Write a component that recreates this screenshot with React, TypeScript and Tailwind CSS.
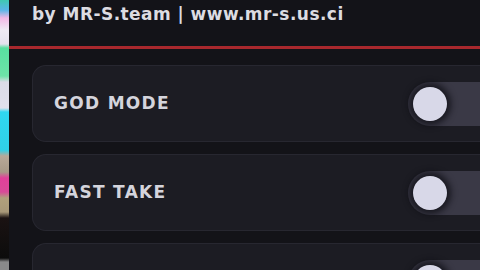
export default function App() {
  const items = ["GOD MODE", "FAST TAKE", ""];

  return (
    <div className="flex h-[270px] w-[480px] overflow-hidden bg-[#131318] font-['DejaVu_Sans',sans-serif]">
      {/* game behind the menu */}
      <div className="w-[9px] shrink-0 bg-[linear-gradient(180deg,#3fc9b0_0px,#5ab6e8_10px,#f2b8e6_18px,#eeeaf4_30px,#e4e2ee_44px,#58e0a0_48px,#6de3a8_76px,#dcdce8_82px,#e0e0ec_108px,#2fd7f0_112px,#30d0e8_150px,#b8a898_156px,#a89a88_172px,#e0409a_178px,#d84a98_192px,#b0a07c_198px,#a89878_212px,#1a1212_218px,#0c0c0c_258px,#8a8a8a_262px)]" />

      <div className="flex min-w-0 flex-1 flex-col">
        <div className="flex h-[46px] shrink-0 items-start pl-[23px]">
          <span className="text-[17px] font-bold leading-[28px] tracking-[0.45px] text-[#dcdce2]">
            by MR-S.team | www.mr-s.us.ci
          </span>
        </div>
        <div className="h-[3px] shrink-0 bg-[#a8282d]" />

        <div className="flex flex-col gap-[12px] pl-[23px] pt-[16px]">
          {items.map((label, i) => (
            <div
              key={i}
              className="flex h-[77px] shrink-0 items-center justify-between rounded-l-[14px] border border-r-0 border-[#272730] bg-[#1c1c23] pl-[21px]"
            >
              <span className="text-[17px] font-bold tracking-[1.3px] text-[#d4d4dc]">
                {label}
              </span>
              <div className="relative h-[44px] w-[72px] rounded-l-full bg-[#3a3946]">
                <div className="absolute left-[5px] top-[5px] h-[34px] w-[34px] rounded-full bg-[#d8d8e8] shadow-[0_0_6px_4px_rgba(10,10,16,0.7)]" />
              </div>
            </div>
          ))}
        </div>
      </div>
    </div>
  );
}
